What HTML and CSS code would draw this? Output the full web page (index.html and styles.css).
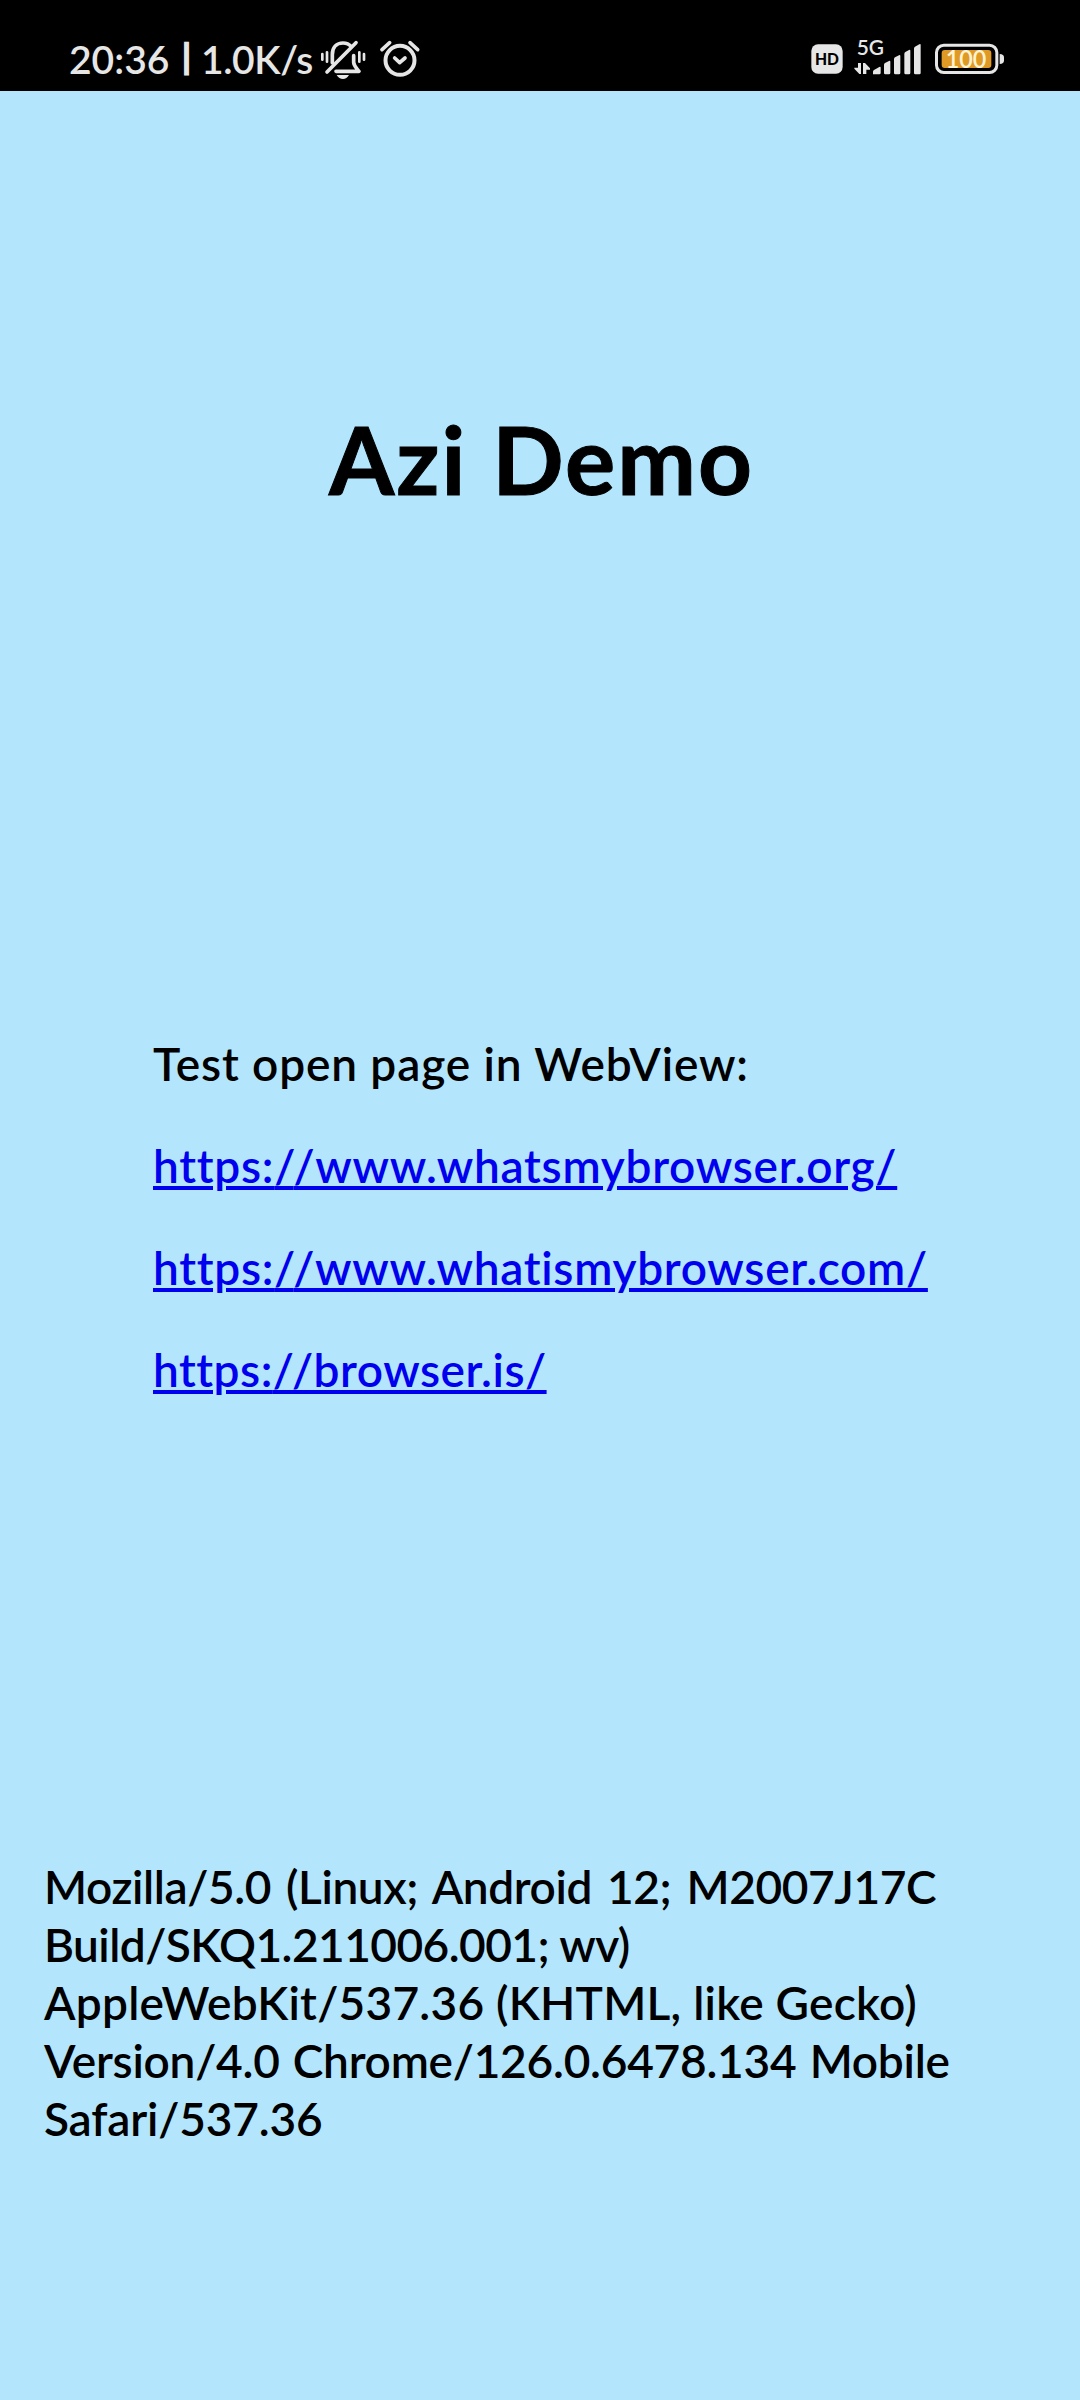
FILE: index.html
```html
<!DOCTYPE html>
<html lang="en">
<head>
<meta charset="utf-8">
<title>Azi Demo</title>
<link rel="stylesheet" href="styles.css">
</head>
<body>
<header class="status">
  <div class="status-left">
    <span class="clock">20:36</span><span class="divider">|</span><span class="speed">1.0K/s</span>
    <svg class="icon-mute" viewBox="60 60 138 120" width="46" height="40" fill="none" stroke="#e6e6e6" stroke-linecap="round" stroke-linejoin="round">
      <path d="M67 102V119M81 97V125M178 97V125M192 102V119" stroke-width="8"/>
      <path d="M97 128V104C97 82 110 69 129 69C140 69 148 73 154 80" stroke-width="11"/>
      <path d="M161 107V127C162 139 170 145 177 154H108" stroke-width="11"/>
      <path d="M81 156L168 68" stroke-width="11"/>
      <path d="M110 165H147Q140 177 129 177Q117 177 110 165Z" fill="#e6e6e6" stroke="none"/>
    </svg>
    <svg class="icon-alarm" viewBox="236 60 126 114" width="42" height="38" fill="none" stroke="#e6e6e6" stroke-linecap="round" stroke-linejoin="round">
      <circle cx="299" cy="121" r="43.500" stroke-width="12"/>
      <path d="M283 114L298 128L314 114" stroke-width="11"/>
      <path d="M245 89L268 68M329 68L352 89" stroke-width="11"/>
    </svg>
  </div>
  <div class="status-right">
    <svg class="icon-hd" viewBox="63 72 96 90" width="32" height="30">
      <rect x="64" y="73" width="94" height="88" rx="20" fill="#e6e6e6"/>
      <text class="hd-text" x="111" y="134" text-anchor="middle" textLength="72" lengthAdjust="spacingAndGlyphs">HD</text>
    </svg>
    <svg class="icon-signal" viewBox="192 45 204 120" width="68" height="40" fill="#e6e6e6">
      <text class="net-text" x="200" y="105" textLength="82" lengthAdjust="spacingAndGlyphs">5G</text>
      <path d="M204 129H213V162H208L193 146V143H204ZM219 162V129H225L240 145V149H229V162Z"/>
      <path d="M249 163V155Q249 152 252 150L268 141Q272 139 272 143V159Q272 163 268 163ZM282 159V134Q282 131 285 129L297 123Q301 121 301 125V159Q301 163 297 163H286Q282 163 282 159ZM312 159V118Q312 114 315 112L327 106Q331 104 331 108V159Q331 163 327 163H316Q312 163 312 159ZM343 159V102Q343 98 346 96L357 90Q361 88 361 92V159Q361 163 357 163H347Q343 163 343 159ZM372 159V86Q372 82 375 80L388 73Q392 71 392 75V159Q392 163 388 163H376Q372 163 372 159Z"/>
    </svg>
    <svg class="icon-battery" viewBox="432 69 213 96" width="71" height="32">
      <rect x="439.500" y="75.500" width="181" height="82" rx="22" fill="none" stroke="#e6e6e6" stroke-width="9"/>
      <rect x="455" y="90" width="149" height="54" rx="9" fill="#df9a25"/>
      <path d="M629 102Q642 103 642 112V122Q642 131 629 132Z" fill="#e6e6e6"/>
      <text class="battery-text" x="528" y="145" text-anchor="middle" textLength="122" lengthAdjust="spacingAndGlyphs">100</text>
    </svg>
  </div>
</header>
<main>
  <h1>Azi Demo</h1>
  <section class="links">
    <p class="intro">Test open page in WebView:</p>
    <p><a class="org" href="https://www.whatsmybrowser.org/">https:<span class="slash">/</span>/www.whatsmybrowser.org/</a></p>
    <p><a href="https://www.whatismybrowser.com/">https:<span class="slash">/</span>/www.whatismybrowser.com/</a></p>
    <p><a class="short" href="https://browser.is/">https:<span class="slash">/</span>/browser.is/</a></p>
  </section>
  <p class="agent">
    <span class="device">Mozilla/5.0 (Linux; Android 12; M2007J17C</span>
    <span class="build">Build/SKQ1.211006.001; wv)</span>
    <span class="engine">AppleWebKit/537.36 (KHTML, like Gecko)</span>
    <span class="version">Version/4.0 Chrome/126.0.6478.134 Mobile</span>
    <span class="safari">Safari/537.36</span>
  </p>
</main>
</body>
</html>
```
FILE: styles.css
```css
* { box-sizing: border-box; }

body {
  margin: 0;
  min-height: 2400px;
  background: #b3e5fc;
  color: #000;
  font: 600 46px/58px Lato, "Noto Sans", sans-serif;
}

h1, p { margin: 0; }

.status {
  display: flex;
  justify-content: space-between;
  height: 91px;
  padding: 0 75px 0 69px;
  background: #000;
  color: #e6e6e6;
}

.status-left, .status-right { display: flex; align-items: flex-start; }

.status-left { font-size: 39px; line-height: 47px; padding-top: 36px; }
.clock { width: 113px; }
.divider { width: 19px; font-size: 34px; line-height: 40px; font-weight: 900; -webkit-text-stroke: 1.2px #e6e6e6; }
.speed { width: 119px; letter-spacing: -.4px; }
.icon-mute { margin-top: 4px; }
.icon-alarm { margin: 4px 0 0 12.667px; }

.status-right { padding-top: 35px; }
.icon-hd { margin-top: 9px; }
.icon-signal { margin-left: 11px; }
.icon-battery { margin: 8px 0 0 12px; }
.hd-text { font: 900 48px Lato, sans-serif; fill: #000; }
.net-text { font: 600 63px Lato, sans-serif; }
.battery-text { font: 600 74px Lato, sans-serif; fill: #fff3d2; }

h1 {
  padding: 308px 0 0 3px;
  text-align: center;
  font-size: 94px;
  line-height: 120px;
  font-weight: 700;
  letter-spacing: 2px;
  -webkit-text-stroke: 1px #000;
}

.links {
  display: flex;
  flex-direction: column;
  gap: 44px;
  margin: 516px 0 0 153px;
  letter-spacing: .71px;
}

.intro { letter-spacing: .88px; }
.links a {
  color: #0000ee;
  text-decoration-thickness: 4px;
  text-underline-offset: 3px;
}
.links .org { letter-spacing: .73px; }
.links .short { letter-spacing: .5px; }
.links .slash { letter-spacing: -2px; }

.agent {
  display: flex;
  flex-direction: column;
  margin: 459px 44px 0;
}
.device { letter-spacing: -.4px; word-spacing: 4px; }
.build { letter-spacing: -.54px; }
.engine { letter-spacing: .25px; }
.version { letter-spacing: -.24px; word-spacing: 2px; }
.safari { letter-spacing: -.15px; }
```
